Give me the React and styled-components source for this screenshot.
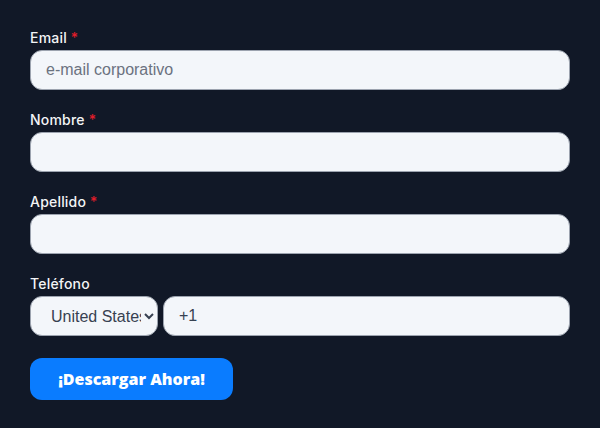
import React from 'react';
import styled, { createGlobalStyle } from 'styled-components';

const Global = createGlobalStyle`
    body{
        margin: 0;
        background: #111827;
        font-family: "Liberation Sans", Arial, sans-serif;
    }
`;

const Form = styled.form`
    padding: 29px 30px 28px 30px;
    display: flex;
    flex-direction: column;
`;

const Group = styled.div`
    display: flex;
    flex-direction: column;
    margin-bottom: 21px;
`;

const Label = styled.label`
    font-family: "Inter", "Open Sans", sans-serif;
    font-size: 14px;
    font-weight: 500;
    letter-spacing: 0.2px;
    color: #f3f4f6;
    line-height: 18px;
    margin-bottom: 3px;
    > span{
        color: #e11d2a;
    }
`;

const Field = styled.input`
    box-sizing: border-box;
    height: 40px;
    width: 100%;
    padding: 0 15px;
    border: 1px solid #9ca3af;
    border-radius: 12px;
    background: #f3f6fa;
    font-family: "Liberation Sans", Arial, sans-serif;
    font-size: 16px;
    color: #374151;
    outline: none;
    &::placeholder{
        color: #6b7280;
    }
`;

const PhoneRow = styled.div`
    display: flex;
    gap: 5px;
`;

const Country = styled.select`
    box-sizing: border-box;
    width: 128px;
    height: 40px;
    padding: 0 0 0 16px;
    border: 1px solid #9ca3af;
    border-radius: 12px;
    background: #f3f6fa;
    font-family: "Liberation Sans", Arial, sans-serif;
    font-size: 16px;
    color: #374151;
`;

const Submit = styled.button`
    align-self: flex-start;
    width: 203px;
    height: 42px;
    margin-top: 1px;
    border: none;
    border-radius: 12px;
    background: #0a7cff;
    color: #fff;
    font-family: "Open Sans", "Inter", sans-serif;
    font-weight: 800;
    font-size: 16px;
    cursor: pointer;
`;

const Req = () => <span>*</span>;

export default function App(){
    return (
        <>
            <Global/>
            <Form onSubmit={e => e.preventDefault()}>
                <Group>
                    <Label>Email <Req/></Label>
                    <Field type="email" placeholder="e-mail corporativo"/>
                </Group>
                <Group>
                    <Label>Nombre <Req/></Label>
                    <Field type="text"/>
                </Group>
                <Group>
                    <Label>Apellido <Req/></Label>
                    <Field type="text"/>
                </Group>
                <Group>
                    <Label>Teléfono</Label>
                    <PhoneRow>
                        <Country defaultValue="US">
                            <option value="US">United States</option>
                            <option value="MX">Mexico</option>
                            <option value="ES">España</option>
                        </Country>
                        <Field type="tel" defaultValue="+1"/>
                    </PhoneRow>
                </Group>
                <Submit type="submit">¡Descargar Ahora!</Submit>
            </Form>
        </>
    );
}
